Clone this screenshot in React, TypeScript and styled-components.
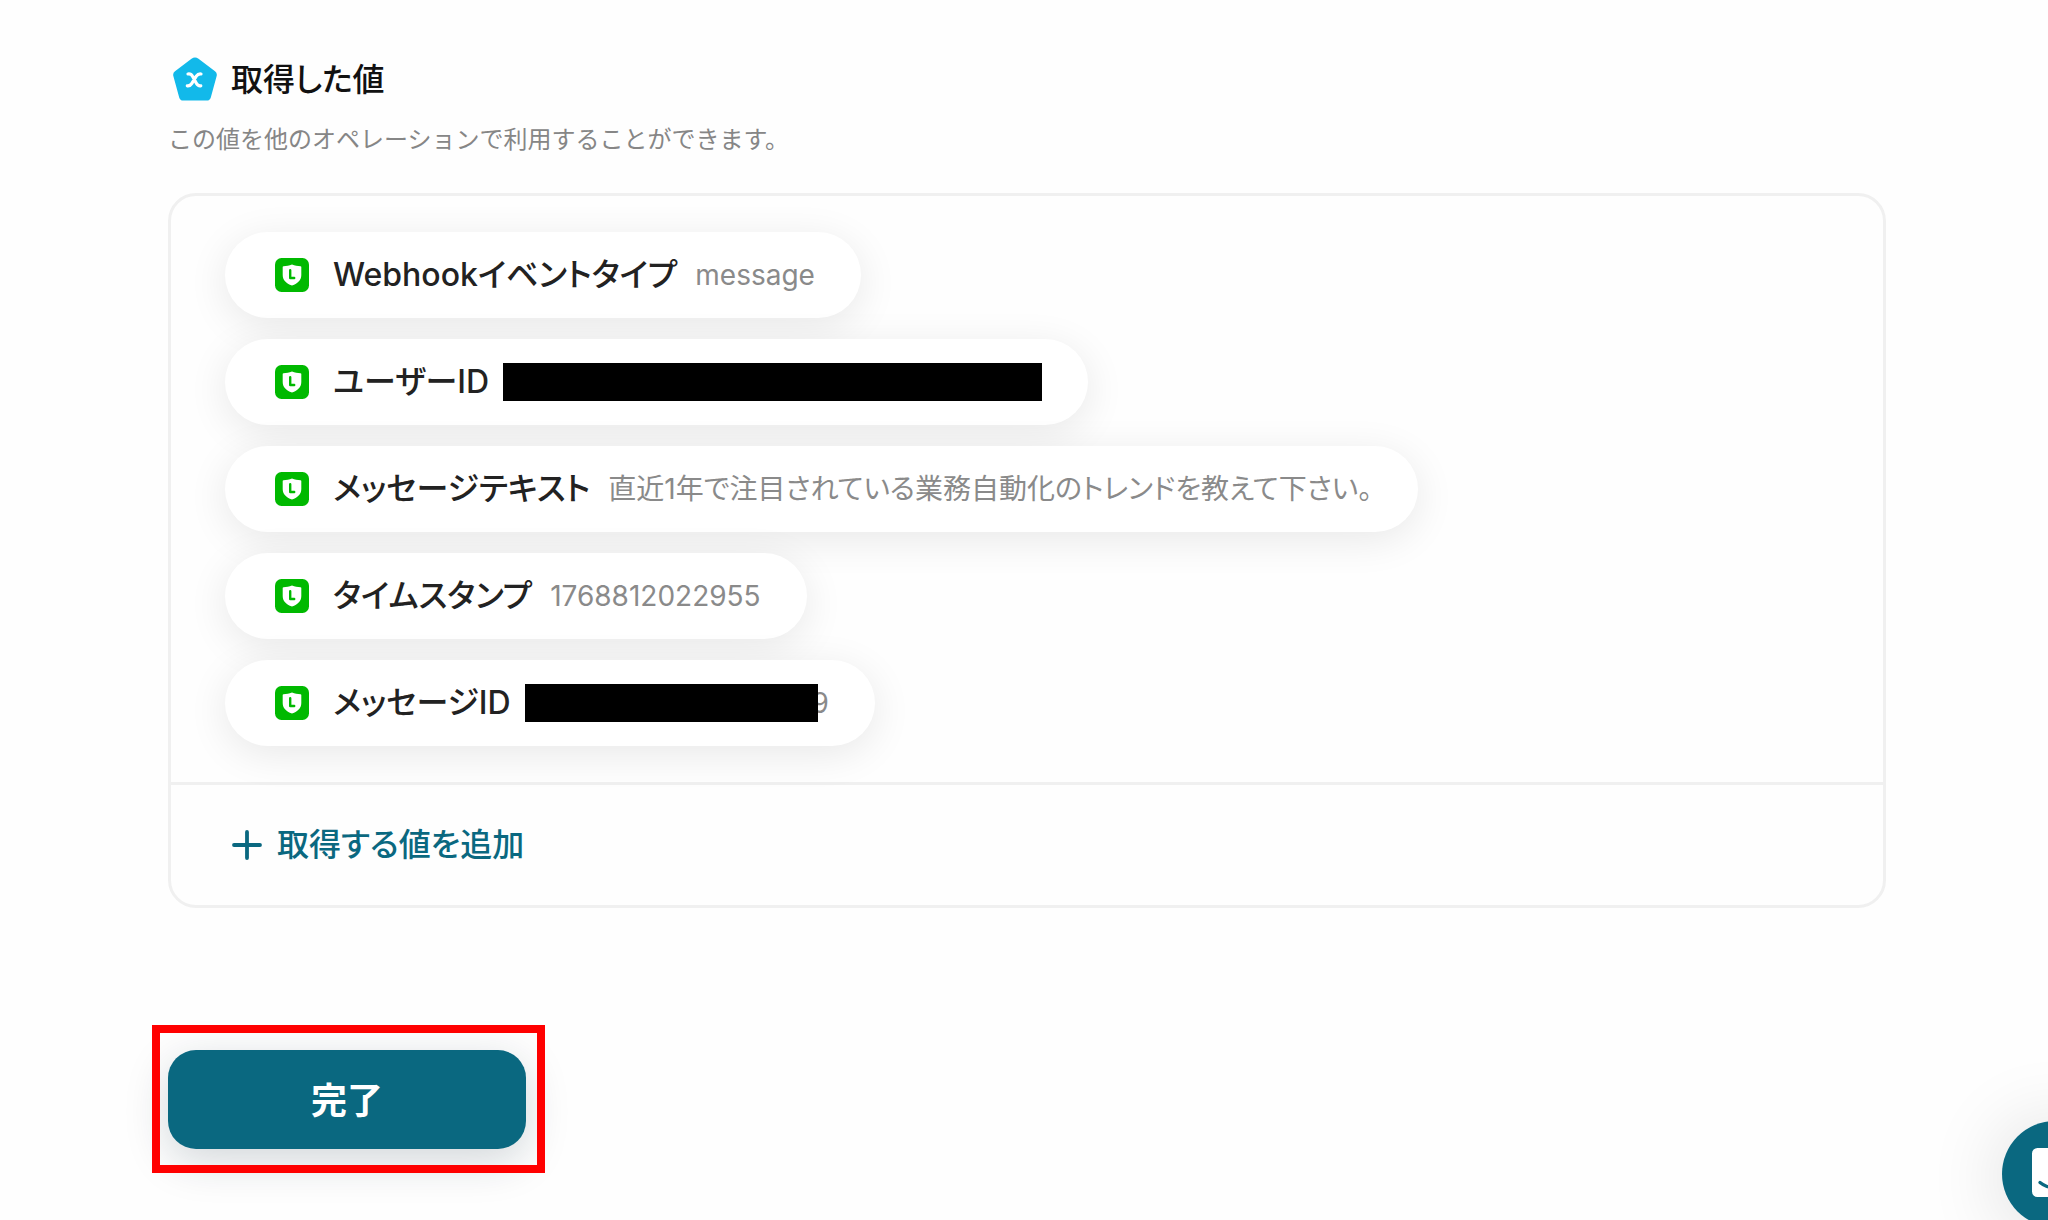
import React from "react";
import styled, { createGlobalStyle } from "styled-components";

const teal = "#0a6880";
const line = "#f0f0f0";

const GlobalStyle = createGlobalStyle`
  *, *::before, *::after { box-sizing: border-box; }
  body {
    margin: 0;
    background: #fefefe;
    color: #222;
    font-family: Inter, "Noto Sans CJK JP", sans-serif;
    font-feature-settings: "palt";
  }
  h2, p, ul { margin: 0; padding: 0; }
`;

const Page = styled.main`
  padding: 56px 162px 70px 168px;
`;

const Heading = styled.h2`
  display: flex;
  align-items: center;
  gap: 13px;
  height: 48px;
  padding-left: 4px;
  color: #111;
  font-size: 32px;
  font-weight: 500;
  line-height: 48px;
`;

const Description = styled.p`
  margin-top: 18px;
  color: #868686;
  font-feature-settings: normal;
  font-size: 24px;
  line-height: 36px;
`;

const Card = styled.section`
  margin-top: 35px;
  border: 3px solid ${line};
  border-radius: 28px;
`;

const ValueList = styled.ul`
  display: flex;
  flex-direction: column;
  align-items: flex-start;
  gap: 21px;
  padding: 36px 54px;
  list-style: none;
`;

const Pill = styled.li`
  display: flex;
  align-items: center;
  min-height: 86px;
  padding: 0 46px 0 50px;
  border-radius: 43px;
  background: #fff;
  box-shadow: 0 8px 40px rgba(0, 0, 0, 0.09);
`;

const Label = styled.span`
  margin-left: 24px;
  color: #222;
  font-size: 32px;
  font-weight: 500;
  line-height: 40px;
`;

const Value = styled.span`
  display: flex;
  align-items: center;
  margin-left: 18px;
  color: #8a8a8a;
  font-size: 28px;
  line-height: 40px;
`;

const Redaction = styled.span<{ $width: number; $overlap: boolean }>`
  position: relative;
  width: ${(p) => p.$width}px;
  height: 38px;
  margin-left: -4px;
  margin-right: ${(p) => (p.$overlap ? "-6px" : "0")};
  background: #000;
`;

const CardFooter = styled.div`
  padding: 28px 60px;
  border-top: 3px solid ${line};
`;

const AddButton = styled.button`
  display: flex;
  align-items: center;
  gap: 14px;
  padding: 0;
  border: 0;
  background: none;
  color: ${teal};
  font: inherit;
  font-feature-settings: "palt";
  font-size: 32px;
  font-weight: 500;
  line-height: 64px;
`;

const Actions = styled.div`
  position: relative;
  width: fit-content;
  margin-top: 142px;

  &::after {
    content: "";
    position: absolute;
    inset: -25px -19px -24px -16px;
    border: 8px solid #f00;
    pointer-events: none;
  }
`;

const DoneButton = styled.button`
  display: block;
  width: 358px;
  height: 99px;
  padding: 0 0 4px;
  border: 0;
  border-radius: 28px;
  background: ${teal};
  box-shadow: 0 12px 44px rgba(10, 40, 55, 0.18);
  color: #fff;
  font: inherit;
  font-size: 36px;
  font-weight: 700;
`;

const Launcher = styled.button`
  position: fixed;
  right: -60px;
  bottom: -7px;
  display: flex;
  align-items: center;
  justify-content: center;
  width: 106px;
  height: 106px;
  padding: 0;
  border: 0;
  border-radius: 50%;
  background: ${teal};
  box-shadow: 0 4px 80px rgba(0, 0, 0, 0.14);
`;

const VariableIcon = () => (
  <svg width="46" height="46" viewBox="0 0 46 46" aria-hidden="true">
    <path
      d="M19.500 1.800a5.600 5.600 0 0 1 7 0L43 14.300a4.600 4.600 0 0 1 1.600 5L38.800 40.400a4.200 4.200 0 0 1-4 3.100H11.200a4.200 4.200 0 0 1-4-3.100L1.400 19.300a4.600 4.600 0 0 1 1.600-5z"
      fill="#12b9ea"
    />
    <path
      d="M16 17c2.200-.3 3.500.5 4.500 2.200l4 7.400c.9 1.700 2 2.500 4.300 2.200M29 17c-2.200-.3-3.500.5-4.700 2.200l-4.600 7.400c-1.100 1.700-2.200 2.500-4.400 2.200"
      fill="none"
      stroke="#fff"
      strokeWidth="3.200"
      strokeLinecap="round"
    />
  </svg>
);

const LineIcon = () => (
  <svg width="34" height="34" viewBox="0 0 34 34" aria-hidden="true">
    <rect width="34" height="34" rx="6.500" fill="#00b900" />
    <path
      d="M8.500 8.200c2.900 0 5.700-.5 8.500-1.700 2.800 1.200 5.600 1.700 8.500 1.700.5 0 .8.300.8.800v8c0 4.900-3.200 8.400-9.300 10.500-6.100-2.100-9.300-5.600-9.300-10.500V9c0-.5.3-.8.800-.8z"
      fill="#fff"
    />
    <path
      d="M15.200 12.300v7.700h4"
      fill="none"
      stroke="#00b900"
      strokeWidth="2.400"
      strokeLinecap="round"
      strokeLinejoin="round"
    />
  </svg>
);

const PlusIcon = () => (
  <svg width="32" height="32" viewBox="0 0 32 32" aria-hidden="true">
    <path
      d="M16 3v26M3 16h26"
      fill="none"
      stroke="currentColor"
      strokeWidth="3.800"
      strokeLinecap="round"
    />
  </svg>
);

const ChatIcon = () => (
  <svg width="46" height="56" viewBox="0 0 46 56" aria-hidden="true">
    <path
      d="M5.500 2h35A5.500 5.500 0 0 1 46 7.500V56l-14-5H5.500A5.500 5.500 0 0 1 0 45.500v-38A5.500 5.500 0 0 1 5.500 2z"
      fill="#fff"
    />
    <path
      d="M8 36.500c8.500 7 21.500 7 30 0"
      fill="none"
      stroke={teal}
      strokeWidth="3.400"
      strokeLinecap="round"
    />
  </svg>
);

type Item = { label: string; value?: string; masked?: number };

const items: Item[] = [
  { label: "Webhookイベントタイプ", value: "message" },
  { label: "ユーザーID", masked: 539 },
  {
    label: "メッセージテキスト",
    value: "直近1年で注目されている業務自動化のトレンドを教えて下さい。",
  },
  { label: "タイムスタンプ", value: "1768812022955" },
  { label: "メッセージID", masked: 293, value: "9" },
];

export default function App() {
  return (
    <>
      <GlobalStyle />
      <Page>
        <Heading>
          <VariableIcon />
          取得した値
        </Heading>
        <Description>
          この値を他のオペレーションで利用することができます。
        </Description>
        <Card>
          <ValueList>
            {items.map((item) => (
              <Pill key={item.label}>
                <LineIcon />
                <Label>{item.label}</Label>
                <Value>
                  {item.masked && (
                    <Redaction $width={item.masked} $overlap={!!item.value} />
                  )}
                  {item.value}
                </Value>
              </Pill>
            ))}
          </ValueList>
          <CardFooter>
            <AddButton type="button">
              <PlusIcon />
              取得する値を追加
            </AddButton>
          </CardFooter>
        </Card>
        <Actions>
          <DoneButton type="button">完了</DoneButton>
        </Actions>
      </Page>
      <Launcher type="button" aria-label="チャット">
        <ChatIcon />
      </Launcher>
    </>
  );
}
